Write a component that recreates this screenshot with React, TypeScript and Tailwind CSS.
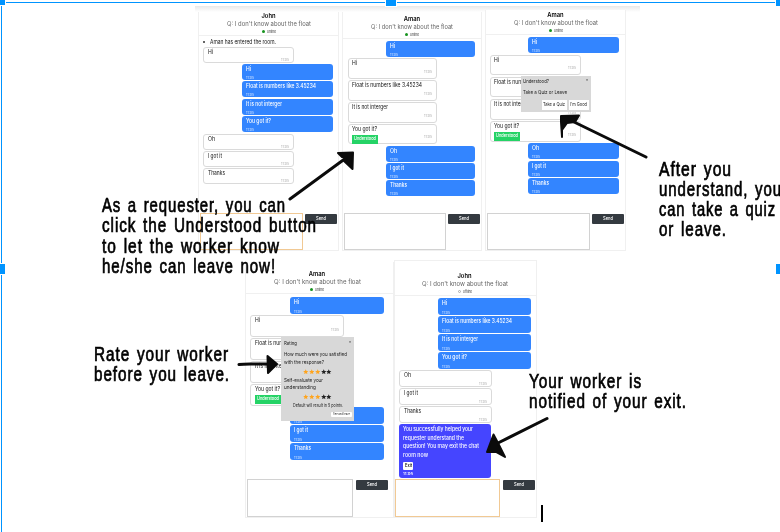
import { useLayoutEffect, useRef, type ReactNode } from "react";

/** Single line of text squeezed or stretched horizontally to a given width. */
function Fit({ w, children, className = "" }: { w: number; children: ReactNode; className?: string }) {
  const ink = useRef<HTMLSpanElement>(null);
  useLayoutEffect(() => {
    const el = ink.current;
    if (el) el.style.transform = `scaleX(${w / el.getBoundingClientRect().width})`;
    return () => {
      if (el) el.style.transform = "";
    };
  }, [w]);
  return (
    <span className={`block whitespace-nowrap ${className}`} style={{ width: w }}>
      <span ref={ink} className="inline-block origin-left">
        {children}
      </span>
    </span>
  );
}

type Message = { mine?: boolean; text: string; w: number; button?: boolean };

const hi = { text: "Hi", w: 5 };
const float = { text: "Float is numbers like 3.45234", w: 70 };
const integer = { text: "It is not interger", w: 36 };
const gotIt = { text: "You got it?", w: 25 };
const oh = { text: "Oh", w: 7 };
const iGot = { text: "I got it", w: 14 };
const thanks = { text: "Thanks", w: 17 };

function Bubble({ m, sizes }: { m: Message; sizes: Sizes }) {
  if (m.mine) {
    return (
      <div className={`flex shrink-0 flex-col justify-between self-end rounded-[3px] bg-[#3385ff] pl-[4px] pt-[1px] text-white ${sizes.w} ${sizes.mine}`}>
        <Fit w={m.w} className="text-[5.8px] font-medium leading-[7px]">{m.text}</Fit>
        <Fit w={8} className="text-[3.8px] leading-[5px] text-[#d5e6ff]">11:05</Fit>
      </div>
    );
  }
  return (
    <div className={`flex shrink-0 justify-between rounded-[3px] border border-[#dadada] bg-white pl-[3.5px] pr-[4px] text-[#111] ${sizes.w} ${sizes.other}`}>
      <div>
        <Fit w={m.w} className="text-[5.8px] leading-[7px]">{m.text}</Fit>
        {m.button && (
          <div className="mt-[3px] flex h-[8.5px] w-[26px] items-center justify-center bg-[#25d366] text-[4.6px] font-medium text-white">
            <Fit w={22}>Understood</Fit>
          </div>
        )}
      </div>
      <Fit w={8} className={`self-end text-[3.8px] text-[#aaa] ${sizes.time}`}>11:05</Fit>
    </div>
  );
}

type Sizes = { w: string; mine: string; other: string; time: string };

type ChatProps = {
  frame: string;
  header: string;
  list: string;
  footer: string;
  input: string;
  name: string;
  titleW: number;
  sizes: Sizes;
  messages: Message[];
  offline?: boolean;
  note?: boolean;
  exit?: boolean;
  children?: ReactNode;
};

function Chat(p: ChatProps) {
  return (
    <section className={`absolute flex flex-col border border-[#f0f0f0] bg-white blur-[0.35px] ${p.frame}`}>
      <header className={`flex shrink-0 flex-col items-center justify-end border-b border-[#f0f0f0] ${p.header}`}>
        <div className="text-[5.8px] font-semibold leading-[8px] text-black">{p.name}</div>
        <Fit w={p.titleW} className="text-[6.6px] leading-[8px] text-[#666]">Q: I don't know about the float</Fit>
        <div className="flex h-[7px] items-center gap-[2px] text-[3.8px] leading-[5px] text-[#333]">
          <i className={`block size-[3px] rounded-full ${p.offline ? "border-[0.5px] border-[#aaa]" : "bg-[#16931e]"}`} />
          <Fit w={9}>{p.offline ? "offline" : "online"}</Fit>
        </div>
      </header>
      <main className={`flex grow flex-col gap-[1.5px] ${p.list}`}>
        {p.note && (
          <div className="flex h-[9px] shrink-0 items-center gap-[5px] pt-[2px] text-[5.6px] text-[#111]">
            <i className="block size-[2px] rounded-full bg-[#333]" />
            <Fit w={66}>Aman has entered the room.</Fit>
          </div>
        )}
        {p.messages.map((m, i) => (
          <Bubble key={i} m={m} sizes={p.sizes} />
        ))}
        {p.exit && (
          <div className="flex h-[54px] w-[92px] shrink-0 flex-col rounded-[3px] bg-[#4545ff] pl-[4px] pt-px text-[5.7px] font-medium leading-[8.7px] text-white">
            <Fit w={70}>You successfully helped your</Fit>
            <Fit w={61}>requester understand the</Fit>
            <Fit w={76}>question! You may exit the chat</Fit>
            <Fit w={25}>room now</Fit>
            <span className="mt-[2px] flex h-[8.5px] w-[10px] shrink-0 items-center justify-center rounded-[1px] bg-white text-[4.2px] text-black">
              <Fit w={7}>Exit</Fit>
            </span>
            <Fit w={10} className="text-[3.8px] leading-[7px]">11:06</Fit>
          </div>
        )}
      </main>
      <footer className={`flex shrink-0 justify-between ${p.footer}`}>
        <div className={`h-full border bg-white ${p.input}`} />
        <div className="mt-px flex h-[9.5px] w-[32px] items-center justify-center rounded-[1px] bg-[#343a40] text-[4.8px] font-medium text-white">
          <Fit w={10}>Send</Fit>
        </div>
      </footer>
      {p.children}
    </section>
  );
}

function Stars() {
  return (
    <div className="flex h-[9px] items-center justify-center gap-[0.3px]">
      {[1, 2, 3, 4, 5].map((n) => (
        <svg key={n} viewBox="0 0 24 24" className={`size-[5.5px] ${n < 4 ? "fill-[#ffa41c]" : "fill-[#222]"}`}>
          <path d="M12 1l3.3 7.3 8 .8-6 5.3 1.8 7.8L12 18.1l-7.1 4.1 1.8-7.8-6-5.3 8-.8z" />
        </svg>
      ))}
    </div>
  );
}

function Note({ at, lines }: { at: string; lines: [string, number][] }) {
  return (
    <div className={`absolute font-['Liberation_Sans_Narrow','Liberation_Sans',sans-serif] text-[19.5px] leading-[20.3px] tracking-[1.2px] text-black [word-spacing:2px] [-webkit-text-stroke:0.7px_black] ${at}`}>
      {lines.map(([text, w]) => (
        <Fit key={text} w={w}>{text}</Fit>
      ))}
    </div>
  );
}

export default function App() {
  return (
    <div className="relative h-[532px] w-[780px] overflow-hidden bg-white font-['Inter','Liberation_Sans',sans-serif]">
      <div className="absolute left-[195px] top-[6px] h-[6px] w-[445px] bg-linear-to-b from-[#e8e8e8] to-white" />

      <Chat
        frame="left-[198px] top-[12px] h-[239px] w-[141px] border-t-0"
        header="h-[24px]"
        list="pl-[4px] pr-[5.5px] pt-[0.2px]"
        footer="h-[37px] px-px"
        input="w-[103px] border-[#f1c994]"
        name="John" titleW={84} note
        sizes={{ w: "w-[91px]", mine: "h-[15.9px]", other: "h-[15.9px]", time: "leading-[5px]" }}
        messages={[hi, { ...hi, mine: true }, { ...float, mine: true }, { ...integer, mine: true }, { ...gotIt, mine: true }, oh, iGot, thanks]}
      />
      <Chat
        frame="left-[342px] top-[12px] h-[239px] w-[140px] border-t-0"
        header="h-[27px]"
        list="pl-[4.5px] pr-[6px] pt-[2.3px]"
        footer="h-[37px] px-px"
        input="w-[102px] border-[#d2d2d2]"
        name="Aman" titleW={82}
        sizes={{ w: "w-[89px]", mine: "h-[15.6px]", other: "h-[20.4px]", time: "leading-[12px]" }}
        messages={[{ ...hi, mine: true }, hi, float, integer, { ...gotIt, button: true }, { ...oh, mine: true }, { ...iGot, mine: true }, { ...thanks, mine: true }]}
      />
      <Chat
        frame="left-[485px] top-[10px] h-[241px] w-[141px] border-t-0"
        header="h-[25px]"
        list="pl-[3.5px] pr-[6px] pt-[2px]"
        footer="h-[37px] px-px"
        input="w-[103px] border-[#d2d2d2]"
        name="Aman" titleW={84}
        sizes={{ w: "w-[91px]", mine: "h-[16px]", other: "h-[20.7px]", time: "leading-[12px]" }}
        messages={[{ ...hi, mine: true }, hi, float, integer, { ...gotIt, button: true }, { ...oh, mine: true }, { ...iGot, mine: true }, { ...thanks, mine: true }]}
      >
        <div className="absolute left-[34.5px] top-[65.5px] flex h-[36px] w-[70px] flex-col bg-[#d8d8d8] px-[2px] pt-[2px] text-[5.2px] text-[#222]">
          <div className="flex justify-between leading-[7px]">
            <Fit w={26}>Understood?</Fit>
            <span className="text-[4px] leading-[4px]">×</span>
          </div>
          <Fit w={44} className="mt-[4px] leading-[7px]">Take a Quiz or Leave</Fit>
          <div className="mt-[4.5px] flex h-[9.5px] justify-end gap-[2px] text-[4.8px]">
            <span className="flex w-[25px] items-center justify-center bg-white"><Fit w={22}>Take a Quiz</Fit></span>
            <span className="flex w-[20px] items-center justify-center bg-white"><Fit w={17}>I'm Good</Fit></span>
          </div>
        </div>
      </Chat>

      <Chat
        frame="left-[245px] top-[262px] h-[256px] w-[149px] border-t-0"
        header="h-[32px] pr-[5px]"
        list="pl-[4px] pr-[9px] pt-[3px]"
        footer="h-[38px] pl-px pr-[5px]"
        input="w-[106px] border-[#d2d2d2]"
        name="Aman" titleW={87}
        sizes={{ w: "w-[94px]", mine: "h-[16.5px]", other: "h-[21.6px]", time: "leading-[12px]" }}
        messages={[{ ...hi, mine: true }, hi, float, integer, { ...gotIt, button: true }, { ...oh, mine: true }, { ...iGot, mine: true }, { ...thanks, mine: true }]}
      >
        <div className="absolute left-[35px] top-[74.5px] flex h-[84px] w-[73px] flex-col bg-[#d8d8d8] px-[2.5px] pt-[3px] text-[5.2px] leading-[7.8px] text-[#222]">
          <div className="flex h-[11.5px] justify-between leading-[7px]">
            <Fit w={13}>Rating</Fit>
            <span className="text-[4px] leading-[4px]">×</span>
          </div>
          <Fit w={63}>How much were you satisfied</Fit>
          <Fit w={40}>with the response?</Fit>
          <div className="h-px shrink-0" />
          <Stars />
          <Fit w={39}>Self-evaluate your</Fit>
          <Fit w={32}>understanding</Fit>
          <Stars />
          <Fit w={50} className="self-center text-[4.8px] leading-[8px]">Default will result in 5 points.</Fit>
          <span className="mt-[2.5px] flex h-[5.5px] w-[21px] shrink-0 items-center justify-center self-end rounded-[1px] bg-white text-[3px]">
            <Fit w={17}>See and leave</Fit>
          </span>
        </div>
      </Chat>
      <Chat
        frame="left-[394px] top-[260px] h-[258px] w-[143px]"
        header="h-[35px] pr-[2px]"
        list="pl-[4px] pr-[5px] pt-[2px]"
        footer="h-[38px] pr-px"
        input="w-[105px] border-[#f1c994]"
        name="John" titleW={86} offline exit
        sizes={{ w: "w-[93px]", mine: "h-[16.5px]", other: "h-[16.5px]", time: "leading-[5px]" }}
        messages={[{ ...hi, mine: true }, { ...float, mine: true }, { ...integer, mine: true }, { ...gotIt, mine: true }, oh, iGot, thanks]}
      />

      <Note at="left-[102px] top-[195px]" lines={[["As a requester, you can", 184], ["click the Understood button", 215], ["to let the worker know", 178], ["he/she can leave now!", 174]]} />
      <Note at="left-[659px] top-[158.5px]" lines={[["After you", 73], ["understand, you", 123], ["can take a quiz", 117], ["or leave.", 68]]} />
      <Note at="left-[94px] top-[343.5px]" lines={[["Rate your worker", 135], ["before you leave.", 136]]} />
      <Note at="left-[529px] top-[370.5px]" lines={[["Your worker is", 113], ["notified of your exit.", 158]]} />

      {/* Hand-drawn arrows */}
      <svg className="absolute inset-0 h-[532px] w-[780px]" viewBox="0 0 780 532" strokeLinecap="round" strokeLinejoin="round" stroke="#0b0b0b" fill="#0b0b0b">
        <path d="M290 199L346 158M646 157L572 121M239 364.500C250 363 260 365 273 363.500M547 418.500L497 443.500" fill="none" strokeWidth="3" />
        <path d="M353 152.500L338 153L342 157L347 157.500L344 161L352.500 169Z" strokeWidth="2" />
        <path d="M561 116L579 115.500L575 122L567 123L562 130V137L561 122Z" strokeWidth="2" />
        <path d="M267.500 356L277 364L268 373Z" strokeWidth="2" />
        <path d="M487 452L493.500 434.500L498 443L505 457L496 452Z" strokeWidth="2" />
      </svg>

      {/* Text caret and selection frame */}
      <div className="absolute left-[541px] top-[505px] h-[17px] w-[1.5px] bg-black" />
      <div className="absolute left-0 top-[2px] h-px w-full bg-[#0094ff]" />
      <div className="absolute left-px top-0 h-full w-px bg-[#0094ff]" />
      <div className="absolute -left-px -top-px h-[7px] w-[7px] border border-white bg-[#0094ff]" />
      <div className="absolute left-[385px] -top-[5px] size-[12px] border border-white bg-[#0094ff]" />
      <div className="absolute left-[775px] -top-[5px] size-[12px] border border-white bg-[#0094ff]" />
      <div className="absolute -left-[6px] top-[263px] size-[12px] border border-white bg-[#0094ff]" />
      <div className="absolute left-[775px] top-[263px] size-[12px] border border-white bg-[#0094ff]" />
    </div>
  );
}
